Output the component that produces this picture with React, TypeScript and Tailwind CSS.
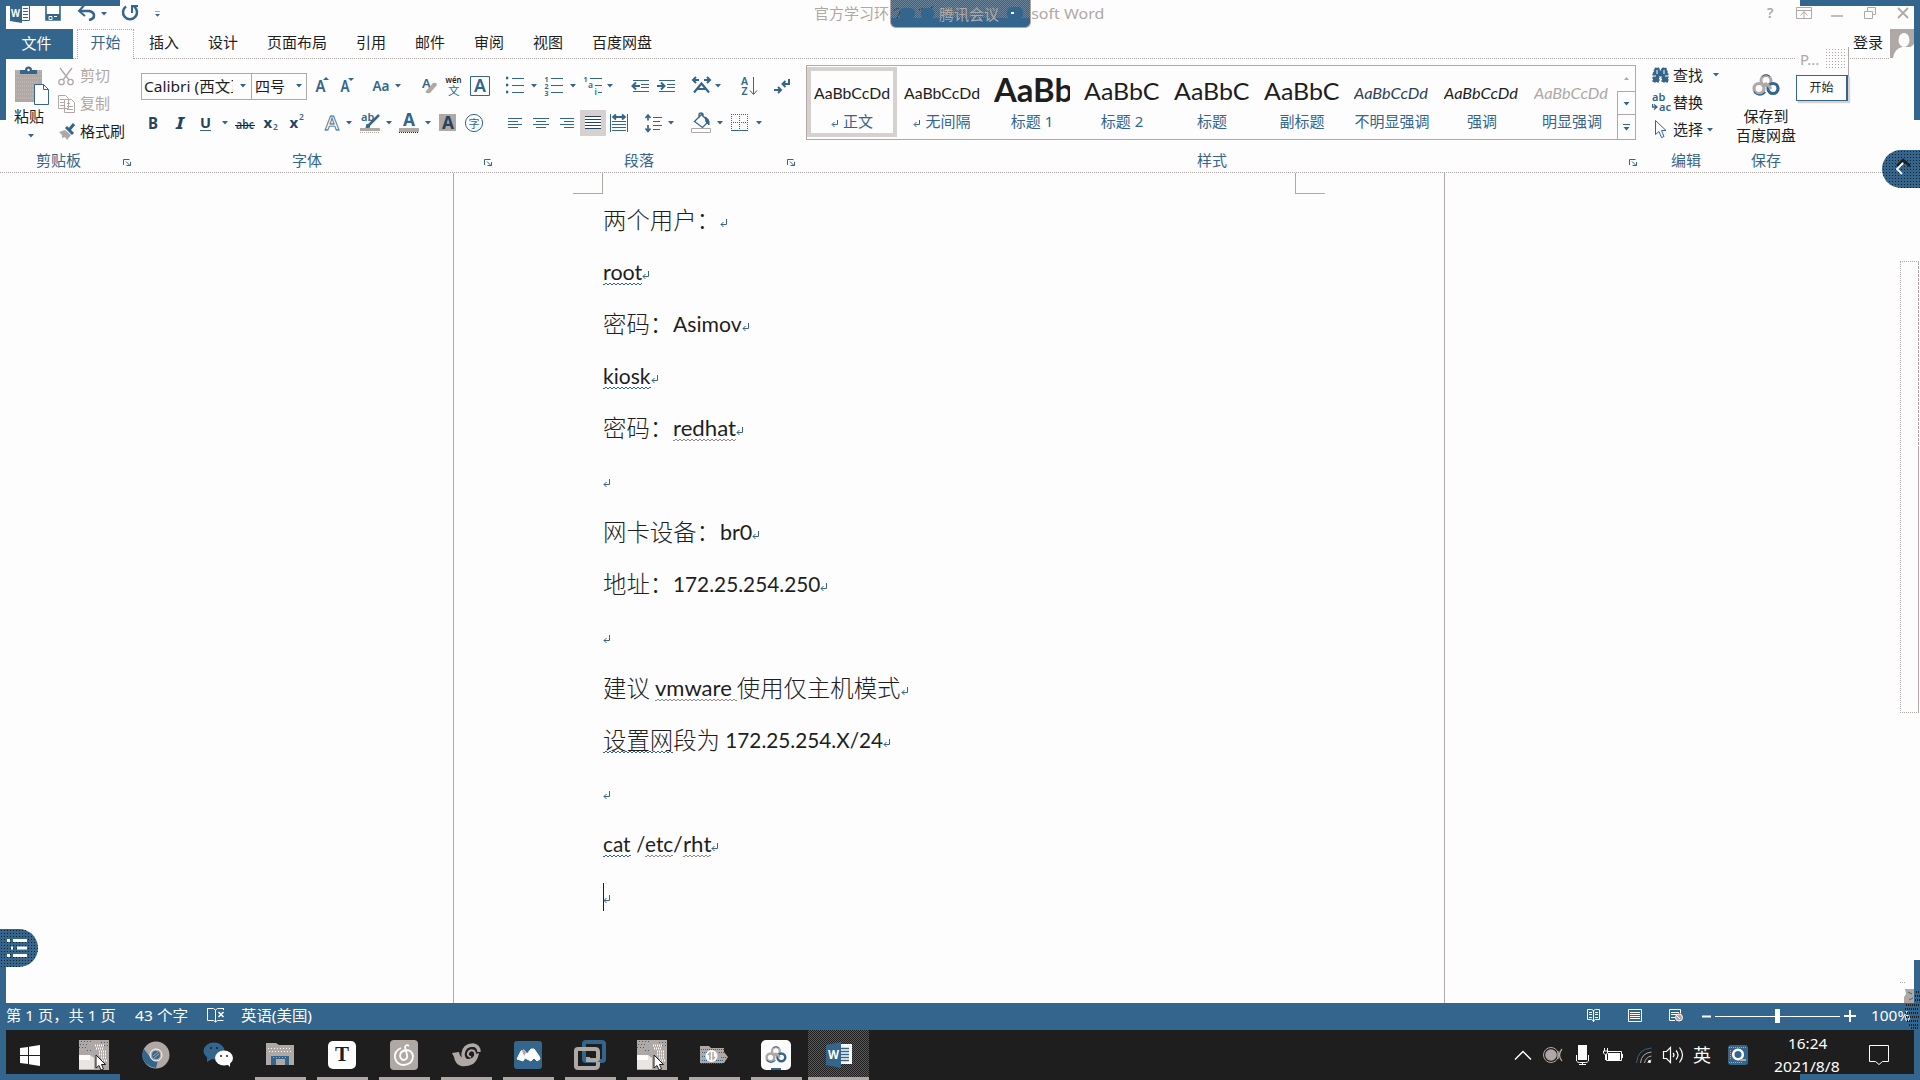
import { useLayoutEffect, useRef, useState, type ReactNode } from 'react';

const BLUE = '#34658d';
const TAUPE = '#b0a8a4';
const INK = '#1e1e1e';

/* Inline drawing whose user space starts at (x, y). */
function Ic({ x, y, w, h, children, className = '' }: { x: number; y: number; w: number; h: number; children?: ReactNode; className?: string }) {
  return (
    <svg width={w} height={h} viewBox={`${x} ${y} ${w} ${h}`} fill="none" stroke={BLUE} strokeWidth={1} className={`block shrink-0 ${className}`}>
      {children}
    </svg>
  );
}

/* Condenses or widens one run of text to a given width. */
function Fit({ w, children, className = '' }: { w: number; children: ReactNode; className?: string }) {
  const ref = useRef<HTMLSpanElement>(null);
  const [s, setS] = useState(1);
  useLayoutEffect(() => {
    if (ref.current) setS(w / ref.current.offsetWidth);
  }, [w]);
  return (
    <span className="block shrink-0" style={{ width: w }}>
      <span ref={ref} className={`inline-block origin-left whitespace-pre ${className}`} style={{ transform: `scaleX(${s})` }}>
        {children}
      </span>
    </span>
  );
}

function Txt({ x, y, size = 18, weight = 400, fill = BLUE, children, italic, len }: { x: number; y: number; size?: number; weight?: number; fill?: string; children: string; italic?: boolean; len?: number }) {
  return (
    <text x={x} y={y} fontSize={size} fontWeight={weight} fill={fill} stroke="none" fontStyle={italic ? 'italic' : 'normal'} textLength={len} lengthAdjust="spacingAndGlyphs">
      {children}
    </text>
  );
}

function Arr({ x, y, c = BLUE }: { x: number; y: number; c?: string }) {
  return <path d={`M${x} ${y}h6l-3 3.4z`} fill={c} stroke="none" />;
}

function HDots({ className = '' }: { className?: string }) {
  return <div className={`h-px shrink-0 bg-[repeating-linear-gradient(90deg,#b0a8a4_0_1px,transparent_1px_2px)] ${className}`} />;
}

function Launcher({ x }: { x: number }) {
  return (
    <Ic x={x} y={158} w={9} h={9}>
      <path d={`M${x + 0.5} 165V159.5h6`} />
      <path d={`M${x + 3} 161.5l4 4M${x + 7.5} 162v3.5h-4`} />
    </Ic>
  );
}

function GroupLabel({ children, left, gap, x }: { children: string; left: string; gap: string; x?: number }) {
  return (
    <div className="flex h-[34px] items-start">
      <span className={`mt-[11px] text-[15px] leading-[20px] whitespace-nowrap text-[#34658d] ${left}`}>{children}</span>
      {x !== undefined && <div className={`mt-[19px] ${gap}`}><Launcher x={x} /></div>}
    </div>
  );
}

function ClipboardGroup() {
  return (
    <div className="flex w-[135px] shrink-0 flex-col">
      <div className="flex h-[80px]">
        <div className="flex w-[52px] flex-col items-center">
          <Ic x={6} y={59} w={52} h={46}>
            <path d="M15 70h27v32H15z" fill={TAUPE} stroke="none" />
            <path d="M16 71h26M16 74h26M16 78h26M16 82h22M16 86h18M16 90h18M16 94h18M16 98h18" stroke="#c9c3c0" strokeDasharray="1 1" />
            <path d="M20 74v-4h5q0-3.500 3.500-3.500t3.500 3.500h5v4z" fill={BLUE} stroke="none" />
            <circle cx="28.500" cy="70" r="1.200" fill="#fdfdfd" stroke="none" />
            <path d="M34.500 84.500h9l5 5v15h-14z" fill="#fdfdfd" />
            <path d="M43.500 84.500v5h5" />
          </Ic>
          <span className="mt-[1px] -ml-[6px] text-[15px] leading-[20px] whitespace-nowrap text-[#1e1e1e]">粘贴</span>
          <Ic x={27} y={126} w={8} h={14} className="mr-[3px]"><Arr x={28} y={134} /></Ic>
        </div>
        <div className="flex flex-col pt-[2px] text-[15px] leading-[20px] whitespace-nowrap">
          <div className="flex h-[28px] items-center text-[#b0a8a4]">
            <Ic x={58} y={61} w={22} h={28}>
              <g stroke={TAUPE} strokeWidth="1.300">
                <path d="M60 68l9 12M72 68l-9 12" />
                <circle cx="61.500" cy="82" r="2.700" /><circle cx="70.500" cy="82" r="2.700" />
              </g>
            </Ic>剪切
          </div>
          <div className="flex h-[28px] items-center text-[#b0a8a4]">
            <Ic x={58} y={89} w={22} h={28}>
              <g stroke={TAUPE} fill="#fdfdfd">
                <path d="M58.500 95.500h7l3 3v10h-10zM64.500 99.500h7l3 3v10h-10z" />
                <path d="M60 99.500h4M60 102.500h4M60 105.500h4M67 103.500h3M67 106.500h6M67 109.500h6" />
              </g>
            </Ic>复制
          </div>
          <div className="flex h-[28px] items-center text-[#1e1e1e]">
            <Ic x={58} y={117} w={22} h={28}>
              <path d="M59 132l6-2 6 5-4 5-2-3-3 1 0-3z" fill={TAUPE} stroke="none" />
              <path d="M66 127l7 7M69 130l5-6" strokeWidth="3" />
            </Ic>格式刷
          </div>
        </div>
      </div>
      <GroupLabel left="ml-[30px]" gap="ml-[42px]" x={123}>剪贴板</GroupLabel>
    </div>
  );
}

function FontGroup() {
  return (
    <div className="flex w-[365px] shrink-0 flex-col">
      <div className="flex pt-[13px]">
        <div className="mt-px flex h-[27px] w-[166px] border border-[#b0a8a4] text-[15px] leading-[24px] whitespace-nowrap text-[#1e1e1e]">
          <div className="w-[91px] overflow-hidden pl-[2px]"><Fit w={122}>Calibri (西文正文)</Fit></div>
          <Ic x={233} y={73} w={18} h={25}><path d="M233 73h18v25h-18z" fill="#fdfdfd" stroke="none" /><Arr x={240} y={83} /></Ic>
          <div className="w-[40px] border-l border-[#b0a8a4] pl-[3px]">四号</div>
          <Ic x={291} y={73} w={13} h={25}><Arr x={296} y={83} /></Ic>
        </div>
        <Ic x={307} y={72} w={190} h={30}>
          <Txt x={315.500} y={92} size={16} weight={600} len={10}>A</Txt><path d="M323 80h6l-3-3z" fill={BLUE} stroke="none" />
          <Txt x={340.500} y={92} size={16} weight={600} len={9}>A</Txt><path d="M348 78h6l-3 3z" fill={BLUE} stroke="none" />
          <Txt x={372.500} y={91} size={15} weight={600} len={17}>Aa</Txt><Arr x={395} y={84} />
          <Txt x={422} y={88} size={13} weight={600}>A</Txt>
          <path d="M426 91l7-8q4-1 4 2l-7 8q-5 1-4-2z" fill={TAUPE} stroke="none" />
          <Txt x={445.500} y={83} size={9.500} weight={600} fill={INK} len={16}>wén</Txt>
          <Txt x={448} y={94.500} size={11.500}>文</Txt>
          <path d="M470.500 76.500h19v19h-19z" /><Txt x={474} y={91.500} size={17} weight={600} len={12}>A</Txt>
        </Ic>
      </div>
      <div className="flex h-[37px] pt-[6px]">
        <Ic x={141} y={108} w={356} h={30}>
          <Txt x={148} y={128.500} size={16} weight={700} fill="#25445f" len={10}>B</Txt>
          <Txt x={176} y={128.500} size={16} weight={700} italic fill="#25445f" len={8}>I</Txt>
          <Txt x={200} y={128} size={15} weight={700} fill="#25445f" len={11}>U</Txt><path d="M200 130.500h11" />
          <Arr x={222} y={121} />
          <Txt x={236} y={129} size={12.500} weight={600} fill="#25445f" len={18}>abc</Txt><path d="M235 125.500h20" stroke={INK} />
          <Txt x={263.500} y={128} size={15} weight={700} fill="#25445f">x</Txt><Txt x={273} y={130} size={8.500} weight={600}>2</Txt>
          <Txt x={289.500} y={128} size={15} weight={700} fill="#25445f">x</Txt><Txt x={299} y={120} size={8.500} weight={600}>2</Txt>
          <text x="325" y="130" fontSize="20" fontWeight="600" fill="#fdfdfd" stroke={BLUE} strokeWidth=".8" textLength="14" lengthAdjust="spacingAndGlyphs">A</text>
          <Arr x={346} y={121} />
          <Txt x={361} y={121} size={11} weight={600}>ab</Txt>
          <path d="M368 126l11-11" strokeWidth="2.500" /><path d="M366 128l1-4 3 3z" fill={BLUE} />
          <path d="M360 128h20v3h-20z" fill={TAUPE} stroke="none" /><path d="M360 132.500h20" stroke={TAUPE} strokeDasharray="1 1" />
          <Arr x={386} y={121} />
          <Txt x={403} y={126} size={17} weight={700} len={12}>A</Txt>
          <path d="M399 128h20v4h-20z" fill={TAUPE} stroke="none" /><path d="M399 132.500h20" stroke={INK} strokeDasharray="1 1" />
          <Arr x={425} y={121} />
          <path d="M439 114h17v17h-17z" fill={TAUPE} stroke="none" /><Txt x={442} y={129} size={17} weight={700} fill="#25445f" len={12}>A</Txt>
          <circle cx="474" cy="123" r="8.600" /><Txt x={468.500} y={127.500} size={11}>字</Txt>
        </Ic>
      </div>
      <GroupLabel left="ml-[151px]" gap="ml-[162px]" x={484}>字体</GroupLabel>
    </div>
  );
}

function ParagraphGroup() {
  return (
    <div className="flex w-[300px] shrink-0 flex-col">
      <div className="flex pt-[13px]">
        <Ic x={506} y={72} w={300} h={30}>
          <path d="M506 77h2v2h-2zM506 84h2v2h-2zM506 91h2v2h-2z" fill={BLUE} strokeWidth=".6" />
          <path d="M512 78.500h12M512 85.500h12M512 92.500h12" /><Arr x={531} y={84} />
          <Txt x={544.500} y={81.500} size={7} weight={700}>1</Txt><Txt x={544.500} y={88.500} size={7} weight={700}>2</Txt><Txt x={544.500} y={95.500} size={7} weight={700}>3</Txt>
          <path d="M551 78.500h12M551 85.500h12M551 92.500h12" /><Arr x={570} y={84} />
          <Txt x={583.500} y={81.500} size={7} weight={700}>1</Txt><Txt x={588} y={88} size={8.500} weight={600}>a</Txt><Txt x={594.500} y={95} size={8.500} weight={600}>i</Txt>
          <path d="M590 78.500h12M595 85.500h7M598 92.500h4" /><Arr x={607} y={84} />
          <path d="M633 80.500h16M641 84.500h8M641 87.500h8M633 91.500h16" /><path d="M633 86h7M636 82.500l-3.500 3.500 3.500 3.500" strokeWidth="2" />
          <path d="M659 80.500h16M667 84.500h8M667 87.500h8M659 91.500h16" /><path d="M657 86h7M661 82.500l3.500 3.500-3.500 3.500" strokeWidth="2" />
          <path d="M693 80h6M696 77l-3 3 3 3M704 80h6M707 77l3 3-3 3" strokeWidth="2" /><path d="M694 92.500l7.500-9 7.500 9M697 89h9" strokeWidth="2.200" /><Arr x={715} y={84} />
          <Txt x={741} y={85} size={10.500} weight={600}>A</Txt><Txt x={741.500} y={95} size={10.500} weight={600}>Z</Txt><path d="M753.500 77v17M750 90.500l3.500 4 3.500-4" />
          <path d="M774 90h6M778 87l3 3-3 3M789 79v5h-6M785.500 81l-3 3 3 3" strokeWidth="2" />
        </Ic>
      </div>
      <div className="flex h-[37px] pt-[6px]">
        <Ic x={506} y={108} w={300} h={30}>
          <path d="M508 118.500h14M508 121.500h10M508 124.500h14M508 127.500h10M533 118.500h16M536 121.500h10M533 124.500h16M536 127.500h10M560 118.500h14M564 121.500h10M560 124.500h14M564 127.500h10" />
          <path d="M580 110h26v26h-26z" fill="#d6d1cf" stroke="none" />
          <path d="M585 116h16v13h-16z" fill="#fdfdfd" stroke="none" />
          <path d="M585 116.500h16M585 119.500h16M585 122.500h16M585 125.500h16M585 128.500h16" stroke="#25445f" />
          <path d="M610.500 114v18M627.500 114v18M612 121.500h14M612 124.500h14M612 127.500h14M612 130.500h14" />
          <path d="M613 117h12M616 114.500l-3 2.500 3 2.500M622 114.500l3 2.500-3 2.500" strokeWidth="1.800" />
          <path d="M648 115.500v5M645.500 118l2.500-3 2.500 3M648 125v6M645.500 128.500l2.500 3 2.500-3" strokeWidth="1.700" />
          <path d="M653 117.500h9M653 121.500h7M653 125.500h9M653 129.500h7" /><Arr x={668} y={121} />
          <path d="M694.500 121.500l7-7 7 7-6 6zM699 118v-4q2-2 4 0v3" strokeWidth="1.300" /><path d="M705 117q5 2 4 8l-3-3z" fill={BLUE} />
          <path d="M691.500 128.500h19v4h-19z" stroke={TAUPE} fill="#fdfdfd" /><Arr x={717} y={121} />
          <path d="M731 114.500h17M731.500 114v17M747.500 114v17M739.500 114v17M731 122.500h17" strokeDasharray="1 1" /><path d="M731 130.500h17" /><Arr x={756} y={121} />
        </Ic>
      </div>
      <GroupLabel left="ml-[118px]" gap="ml-[133px]" x={787}>段落</GroupLabel>
    </div>
  );
}

const styleItems = [
  { name: '正文', mark: true, cls: 'text-[15px] text-[#1e1e1e]', w: 76, text: 'AaBbCcDd', on: true },
  { name: '无间隔', mark: true, cls: 'text-[15px] text-[#1e1e1e]', w: 76, text: 'AaBbCcDd' },
  { name: '标题 1', cls: 'text-[32px] font-bold text-[#1e1e1e]', w: 79, text: 'AaBb' },
  { name: '标题 2', cls: 'text-[23px] text-[#1e1e1e]', w: 76, text: 'AaBbC' },
  { name: '标题', cls: 'text-[23px] text-[#1e1e1e]', w: 76, text: 'AaBbC' },
  { name: '副标题', cls: 'text-[23px] text-[#1e1e1e]', w: 76, text: 'AaBbC' },
  { name: '不明显强调', cls: 'text-[15px] italic text-[#2b4256]', w: 74, text: 'AaBbCcDd' },
  { name: '强调', cls: 'text-[15px] italic text-[#1e1e1e]', w: 74, text: 'AaBbCcDd' },
  { name: '明显强调', cls: 'text-[15px] italic text-[#b0a8a4]', w: 74, text: 'AaBbCcDd' },
];

function StylesGroup() {
  return (
    <div className="flex w-[839px] shrink-0 flex-col">
      <div className="flex h-[80px] pt-[6px]">
        <div className="flex h-[75px] w-[830px] shrink-0 border border-[#b0a8a4]">
          {styleItems.map((s) => (
            <div key={s.name} className="w-[90px] shrink-0 py-[1px]">
              <div className={`flex h-[70px] w-[90px] flex-col items-center border-4 ${s.on ? 'border-[#d6d1cf]' : 'border-transparent'}`}>
                <div className="flex h-[41px] w-[76px] items-center overflow-hidden pt-[2px] font-['Lato'] leading-[39px]">
                  <Fit w={s.w} className={s.cls}>{s.text}</Fit>
                </div>
                <div className="flex h-[19px] items-center gap-[4px] text-[15px] leading-[19px] whitespace-nowrap text-[#34658d]">
                  {s.mark && <Ic x={0} y={0} w={8} h={10}><path d="M6.500 3v4.500H1.500M3.500 5L1 7.500 3.500 10" /></Ic>}
                  {s.name}
                </div>
              </div>
            </div>
          ))}
          <div className="flex w-[18px] flex-col">
            <Ic x={1618} y={66} w={18} h={25}><path d="M1625 80h5l-2.500-3z" fill={TAUPE} stroke="none" /></Ic>
            <div className="h-[23px] w-[18px] border-t border-l border-[#b0a8a4]"><Ic x={1619} y={92} w={16} h={22}><Arr x={1624.500} y={102} /></Ic></div>
            <div className="h-[25px] w-[18px] border-t border-l border-[#b0a8a4]"><Ic x={1619} y={115} w={16} h={22}><path d="M1624 124.500h7" /><Arr x={1624.500} y={127} /></Ic></div>
          </div>
        </div>
      </div>
      <GroupLabel left="ml-[391px]" gap="ml-[402px]" x={1630}>样式</GroupLabel>
    </div>
  );
}

function CloudLogo({ s = 1 }: { s?: number }) {
  return (
    <svg width={28 * s} height={22 * s} viewBox="0 0 28 22" fill="none" className="block shrink-0">
      <circle cx="14" cy="6.500" r="5" stroke={TAUPE} strokeWidth="3" />
      <circle cx="7" cy="14.500" r="5" stroke={TAUPE} strokeWidth="3.200" />
      <circle cx="21" cy="14.500" r="5" stroke={BLUE} strokeWidth="3.200" />
      <path d="M11 11l3-1 3 2 2 3" stroke={TAUPE} strokeWidth="3" />
      <path d="M2 17.500q2 3.500 5.500 3.500t6-3" stroke={BLUE} strokeWidth="1.300" />
      <path d="M10 2.500q4-3.500 8 0" stroke={BLUE} />
    </svg>
  );
}

function EditGroup() {
  return (
    <div className="flex w-[84px] shrink-0 flex-col pl-[7px]">
      <div className="flex h-[80px] flex-col pt-[2px] text-[15px] leading-[20px] whitespace-nowrap text-[#1e1e1e]">
        <div className="flex h-[27px] items-center">
          <Ic x={1653} y={61} w={21} h={27}>
            <path d="M1654 74l2-6h4l1 3h1l1-3h4l2 6v8h-6v-6h-3v6h-6z" fill={BLUE} stroke={BLUE} strokeDasharray="2 1" />
            <path d="M1654 76h3M1666 76h3M1658 70v4M1665 70v4" stroke="#fdfdfd" />
          </Ic>
          查找
          <Ic x={1704} y={61} w={20} h={27}><Arr x={1714} y={73} /></Ic>
        </div>
        <div className="flex h-[27px] items-center">
          <Ic x={1653} y={88} w={21} h={27}>
            <Txt x={1653} y={101} size={11} weight={600}>ab</Txt><Txt x={1660} y={110.500} size={11} weight={600}>ac</Txt>
            <path d="M1653.500 104v3h4M1655 104.500l3 2.500-3 2.500" strokeWidth="1.300" />
          </Ic>
          替换
        </div>
        <div className="flex h-[27px] items-center">
          <Ic x={1653} y={115} w={21} h={27}><path d="M1656.500 120.500v14l3.500-3 2.500 6 2.500-1-2.500-6h4.500z" fill="#fdfdfd" /></Ic>
          选择
          <Ic x={1704} y={115} w={12} h={27}><Arr x={1708} y={128} /></Ic>
        </div>
      </div>
      <GroupLabel left="ml-[19px]" gap="">编辑</GroupLabel>
    </div>
  );
}

function SaveGroup() {
  return (
    <div className="-ml-px flex w-[76px] shrink-0 flex-col items-center">
      <div className="flex h-[80px] flex-col items-center pt-[15px] text-[15px] leading-[19px] whitespace-nowrap text-[#1e1e1e]">
        <CloudLogo />
        <span className="mt-[11px]">保存到</span>
        <span>百度网盘</span>
      </div>
      <GroupLabel left="" gap="">保存</GroupLabel>
    </div>
  );
}

const tabs = ['插入', '设计', '页面布局', '引用', '邮件', '审阅', '视图', '百度网盘'];

function TitleBar() {
  return (
    <div className="relative flex h-[29px] shrink-0 justify-between">
      <Ic x={0} y={0} w={170} h={29}>
        <path d="M10 4l12-2v21l-12-2z" fill={BLUE} stroke="none" /><path d="M22 5.500h7.500v15H22M23 8.500h5M23 11.500h5M23 14.500h5M23 17.500h5" />
        <Txt x={11} y={16.500} size={10} weight={700} fill="#fdfdfd" len={9}>W</Txt>
        <path d="M46 4.500v15.500h14V4.500" strokeWidth="1.600" /><path d="M46 14h14v6H46z" fill={BLUE} stroke="none" /><path d="M49 16.500h3v3h-3zM54 16.500h3" stroke="#fdfdfd" />
        <path d="M80 11h9q5 1 5 4.500t-5 4.500" strokeWidth="2.600" /><path d="M84 5.500L79 11l6 5" strokeWidth="2" /><Arr x={101} y={12} />
        <path d="M126 6.500a7 7 0 1 0 8 0" strokeWidth="2.500" /><path d="M132 13V6h6" strokeWidth="2" />
        <path d="M155 11.500h5" stroke={TAUPE} /><path d="M155 14h5l-2.500 2.700z" fill={BLUE} stroke="none" />
      </Ic>
      <div className="absolute top-[3px] left-[814px] flex w-[290px] justify-between text-[15px] leading-[20px] whitespace-nowrap text-[#b0a8a4]">
        <span>官方学习环境</span>
        <Fit w={115}>Microsoft Word</Fit>
      </div>
      <div className="absolute top-0 left-[890px] flex h-[28px] w-[141px] items-center rounded-b-[6px] border border-t-0 border-[#b0a8a4] bg-[#34658d] text-[15px] leading-[20px] text-[#b0a8a4]">
        <div className="absolute inset-x-0 top-0 h-[18px] bg-[repeating-conic-gradient(#6b8499_0_25%,transparent_0_50%)] bg-[length:2px_2px]" />
        <svg width="141" height="27" viewBox="890 0 141 27" className="absolute top-0 left-0" fill={BLUE}>
          <rect x="898" y="8" width="16" height="11" rx="5" /><rect x="920" y="8" width="13" height="11" rx="5" /><rect x="1006" y="7" width="16" height="12" rx="5" />
          <path d="M893 10l5-2M896 18l3-6M918 10l4-2M930 8l3-2" stroke={INK} strokeDasharray="1 1" />
          <path d="M1010 12h3v2h-3z" fill="#fdfdfd" />
        </svg>
        <span className="relative ml-[48px]">腾讯会议</span>
      </div>
      <Ic x={1750} y={0} w={170} h={29}>
        <g stroke={TAUPE}>
          <Txt x={1767} y={18} size={14} weight={600} fill={TAUPE}>?</Txt>
          <path d="M1796.500 7.500h15v11h-15zM1796 10.500h16M1804 18v-6M1800.500 15.500l3.500-4 3.500 4" />
          <path d="M1831 16h12" strokeWidth="1.500" />
          <path d="M1864.500 11.500h8v7h-8zM1867.500 11v-3.500h8v7h-3" />
          <path d="M1898 8l10 10M1908 8l-10 10" strokeWidth="1.800" />
        </g>
      </Ic>
    </div>
  );
}

function TabBar() {
  return (
    <div className="flex h-[30px] shrink-0 text-[15px] leading-[20px] whitespace-nowrap text-[#1e1e1e]">
      <div className="flex w-[73px] items-center justify-center bg-[#34658d] pb-[3px] text-[#fdfdfd]">文件</div>
      <HDots className="mt-[29px] w-[4px]" />
      <div className="flex w-[57px] flex-col">
        <HDots />
        <div className="flex h-[29px] justify-between">
          <div className="w-px bg-[repeating-linear-gradient(#b0a8a4_0_1px,transparent_1px_2px)]" />
          <span className="mt-[2px] text-[#34658d]">开始</span>
          <div className="w-px bg-[repeating-linear-gradient(#b0a8a4_0_1px,transparent_1px_2px)]" />
        </div>
      </div>
      <div className="flex grow flex-col">
        <div className="flex h-[29px] items-start">
          <div className="flex gap-[29px] pt-[3px] pl-[15px]">{tabs.map((t) => <span key={t}>{t}</span>)}</div>
          <span className="mt-[3px] mr-[7px] ml-auto">登录</span>
          <Ic x={1890} y={29} w={30} h={29}>
            <path d="M1890 29h24v15q-3 4-9 4h-3q-9 2-9 11h-3z" fill={TAUPE} stroke="none" />
            <ellipse cx="1904" cy="40" rx="5.500" ry="7" fill="#fdfdfd" stroke="none" />
            <path d="M1909 47l5 1v10h-20q0-9 8-11z" fill="#fdfdfd" stroke="none" />
          </Ic>
        </div>
        <HDots className="w-[1756px]" />
      </div>
    </div>
  );
}

function Mark() {
  return <Ic x={0} y={0} w={9} h={14} className="mt-[22px]"><path d="M6.500 3v5.500H1M3.500 6L1 8.500 3.500 11" /></Ic>;
}

function Wavy({ tone }: { tone: 'blue' | 'red' }) {
  return tone === 'blue'
    ? <i className="absolute inset-x-0 top-[37px] h-[2px] bg-[repeating-conic-gradient(#34658d_0_25%,transparent_0_50%)] bg-[length:4px_2px]" />
    : <i className="absolute inset-x-0 top-[37px] h-[2px] bg-[repeating-conic-gradient(#8f8682_0_25%,transparent_0_50%)] bg-[length:4px_2px]" />;
}

type Run = { t: string; w?: number; u?: 'blue' | 'red' };
const lines: Run[][] = [
  [{ t: '两个用户：' }],
  [{ t: 'root', w: 39, u: 'blue' }],
  [{ t: '密码：' }, { t: 'Asimov', w: 69 }],
  [{ t: 'kiosk', w: 48, u: 'blue' }],
  [{ t: '密码：' }, { t: 'redhat', w: 63, u: 'red' }],
  [],
  [{ t: '网卡设备：' }, { t: 'br0', w: 32 }],
  [{ t: '地址：' }, { t: '172.25.254.250', w: 147 }],
  [],
  [{ t: '建议' }, { t: ' ', w: 5 }, { t: 'vmware ', w: 82, u: 'red' }, { t: '使用仅主机模式' }],
  [{ t: '设置网', u: 'blue' }, { t: '段为' }, { t: ' 172.25.254.X/24', w: 163 }],
  [],
  [{ t: 'cat', w: 28, u: 'blue' }, { t: ' /', w: 14 }, { t: 'etc', w: 28, u: 'red' }, { t: '/', w: 10 }, { t: 'rht', w: 28, u: 'red' }],
  [],
];

function Document() {
  return (
    <div className="relative flex h-[830px] shrink-0 bg-[#fdfdfd]">
      <div className="ml-[453px] flex w-[992px] flex-col border-x border-[#b0a8a4]">
        <div className="flex h-[21px] justify-between pr-[119px] pl-[119px]">
          <div className="h-[21px] w-[30px] border-r border-b border-[#b0a8a4]" />
          <div className="h-[21px] w-[30px] border-b border-l border-[#b0a8a4]" />
        </div>
        <div className="flex flex-col pl-[149px] text-[#1e1e1e]">
          {lines.map((runs, i) => (
            <div key={i} className="flex h-[52px] whitespace-pre">
              {runs.map((r, j) => (
                <div key={j} className="relative shrink-0">
                  {r.w
                    ? <Fit w={r.w} className="font-['Lato'] text-[21.5px] leading-[53px]">{r.t}</Fit>
                    : <span className="block font-['Noto_Sans_CJK_SC',sans-serif] text-[23.4px] leading-[50px] font-light">{r.t}</span>}
                  {r.u && <Wavy tone={r.u} />}
                </div>
              ))}
              {i === lines.length - 1 && <div className="mt-[13px] -mr-px h-[28px] w-px bg-[#1e1e1e]" />}
              <Mark />
            </div>
          ))}
        </div>
      </div>
      <div className="mt-[88px] ml-[455px] h-[452px] w-[19px]">
        <HDots />
        <div className="flex h-[450px] justify-between">
          <div className="w-px bg-[repeating-linear-gradient(#b0a8a4_0_1px,transparent_1px_2px)]" />
          <div className="flex w-px flex-col">
            <div className="h-[186px] bg-[repeating-linear-gradient(#b0a8a4_0_3px,transparent_3px_4px)]" />
            <div className="grow bg-[#b0a8a4]" />
          </div>
        </div>
        <HDots />
      </div>
    </div>
  );
}

function StatusBar() {
  return (
    <div className="flex h-[27px] shrink-0 items-start bg-[#34658d] text-[15px] leading-[20px] whitespace-nowrap text-[#fdfdfd]">
      <div className="mt-[2px] ml-[6px] w-[129px]"><Fit w={110}>第 1 页，共 1 页</Fit></div>
      <div className="mt-[2px] w-[72px]"><Fit w={53}>43 个字</Fit></div>
      <Ic x={207} y={1003} w={34} h={27}>
        <g stroke="#fdfdfd"><path d="M207.500 1008.500h6l2 1.500 2-1.500h6M207.500 1008v12.500h6l2 1.500 2-1.500h6M215.500 1010v12M223.500 1008v2" /><path d="M218.500 1012l5 5M223.500 1012l-5 5" strokeWidth="1.600" /></g>
      </Ic>
      <div className="mt-[2px]"><Fit w={71}>英语(美国)</Fit></div>
      <Ic x={1580} y={1003} w={290} h={27} className="ml-auto">
        <g stroke="#fdfdfd">
          <path d="M1587.500 1009.500h4l2 1 2-1h4v10h-4l-2 1.500-2-1.500h-4zM1593.500 1010v12M1589 1012.500h3M1589 1014.500h3M1589 1017.500h3M1595 1012.500h3M1595 1014.500h3M1595 1017.500h3" />
          <path d="M1628.500 1009.500h13v12h-13zM1630 1012.500h10M1630 1014.500h10M1630 1016.500h10M1630 1018.500h10" />
          <path d="M1675 1020.500h-5.500v-11h11v4M1671 1012.500h8M1671 1014.500h6M1671 1017.500h4" />
          <circle cx="1679" cy="1017.500" r="3.500" fill={TAUPE} /><path d="M1677 1016l3 3" />
          <path d="M1702 1016.500h9" strokeWidth="2" /><path d="M1715 1016.500h125" /><path d="M1775 1009h5v14h-5z" fill="#fdfdfd" stroke="none" />
          <path d="M1844 1016h12M1850 1010v12" strokeWidth="2" />
        </g>
      </Ic>
      <div className="mt-[2px] mr-[10px] ml-[1px]"><Fit w={39}>100%</Fit></div>
    </div>
  );
}

function Cursor({ x, y }: { x: number; y: number }) {
  return <path d={`M${x} ${y}v13l3-2.500 2 4.500 2.500-1-2-4.500h4z`} fill="#fdfdfd" stroke={INK} />;
}

function Photo() {
  return (
    <svg width="30" height="30" viewBox="0 0 30 30" className="block">
      <path d="M0 0h30v30H0z" fill={TAUPE} />
      <path d="M2 1.500h10M1 4.500h9M0 7.500h8M8 10.500h4M22 2.500h7M25 5.500h4" stroke={BLUE} strokeDasharray="1 2" />
      <path d="M16 5.500h9M17 8.500h8M20 11.500h8M20 14.500h8M22 17.500h6M23 20.500h5" stroke="#fdfdfd" strokeWidth="2" strokeDasharray="1 1" />
      <path d="M0 15h11l4 3v11H0z" fill="#e8e5e3" /><path d="M0 15h11v5H0z" fill="#fdfdfd" />
      <Cursor x={17} y={15} />
    </svg>
  );
}

const taskIcons: { k: string; line: boolean; el: ReactNode }[] = [
  { k: 'photo', line: false, el: <Photo /> },
  {
    k: 'chrome', line: false, el: (
      <svg width="30" height="30" viewBox="0 0 30 30" fill="none"><circle cx="15" cy="15" r="13.500" fill={TAUPE} /><path d="M3 9q-5 9 4 16 4 3 8 3l2-8-7-2z" fill={BLUE} /><circle cx="15" cy="15" r="6" fill={TAUPE} stroke="#fdfdfd" /><circle cx="15" cy="15" r="4" fill={BLUE} /><path d="M12 16l5-4M13 18l5-4" stroke={TAUPE} /></svg>),
  },
  {
    k: 'wechat', line: false, el: (
      <svg width="30" height="30" viewBox="0 0 30 30"><ellipse cx="11" cy="11" rx="10.500" ry="8.500" fill={BLUE} /><path d="M4 17v5l5-3z" fill={BLUE} /><ellipse cx="21" cy="18" rx="9" ry="7.500" fill="#fdfdfd" /><path d="M24 24l3 3v-5z" fill="#fdfdfd" /><path d="M17 16h2M23 16h2M7 8h2M13 8h2" stroke={INK} strokeWidth="1.500" /></svg>),
  },
  {
    k: 'explorer', line: true, el: (
      <svg width="30" height="30" viewBox="0 0 30 30"><path d="M1 3h10l3 2h15v20H1z" fill={TAUPE} /><path d="M3 8.500h24M4 11.500h22" stroke="#fdfdfd" strokeDasharray="1 2" /><path d="M6 16h18v9h-4v-6h-9v6H6z" fill={BLUE} /><path d="M8 17.500h14" stroke={TAUPE} strokeDasharray="1 2" /></svg>),
  },
  {
    k: 'typora', line: true, el: (
      <div className="flex h-[28px] w-[28px] items-center justify-center rounded-[5px] bg-[#fdfdfd] pb-px font-['Liberation_Serif'] text-[21px] leading-none font-bold text-[#1e1e1e]">T</div>),
  },
  {
    k: 'music', line: true, el: (
      <svg width="30" height="30" viewBox="0 0 30 30" fill="none" stroke="#fdfdfd" strokeWidth="1.800"><rect x="1" y="0" width="28" height="30" rx="4" fill={TAUPE} stroke="none" /><path d="M12 8q-7 3-6 10 2 7 9 7 9-1 9-9-1-6-7-6-6 1-6 6 1 4 4 4 4-1 3-5l-2-8q1-3 4-1" /></svg>),
  },
  {
    k: 'swirl', line: true, el: (
      <svg width="30" height="30" viewBox="0 0 30 30" fill="none" stroke={TAUPE}>
        <path d="M1 13l7-1q1 7 8 7 6 0 9-5l3-1q-1 7-6 11-6 3-12 2Q4 24 3 17z" fill={TAUPE} stroke="none" />
        <path d="M19 22q-7-1-7-8 1-9 10-9 6 1 6 7" strokeWidth="3.400" />
        <path d="M20 17q-4-1-3-4 2-4 6-2 3 4-1 8" strokeWidth="2" />
      </svg>),
  },
  {
    k: 'mail', line: true, el: (
      <svg width="30" height="30" viewBox="0 0 30 30"><rect x="1" y="1" width="28" height="28" rx="3" fill={BLUE} /><path d="M4 19l4-8 3-1 3 4 4-5 3 0 5 7 1 3-3 2-3-3-3 3-4-2-2-1-2 3z" fill="#fdfdfd" stroke="#fdfdfd" strokeLinejoin="round" /><path d="M9 10.500l2-1.500 2 4-2 3z" fill={TAUPE} /></svg>),
  },
  {
    k: 'vmware', line: true, el: (
      <svg width="32" height="30" viewBox="0 0 32 30" fill="none" strokeWidth="4"><rect x="10" y="2" width="20" height="19" rx="2" stroke={BLUE} /><path d="M24 22v3q0 3-3 3H4q-2 0-2-2V11q0-2 2-2h17q3 0 3 3v6q0 2-2 2H14v-3" stroke={TAUPE} /></svg>),
  },
  { k: 'photo2', line: true, el: <Photo /> },
  {
    k: 'transfer', line: true, el: (
      <svg width="30" height="30" viewBox="0 0 30 30"><path d="M1 6h9l2 2h13v4l4 5-4 6H1z" fill={TAUPE} /><path d="M2 9.500h24M3 12.500h6M3 16.500h4M3 20.500h22M20 12.500h5M22 17.500h5M2 23.500h22" stroke={BLUE} strokeDasharray="1 1" /><circle cx="12.500" cy="16" r="6" fill="#fdfdfd" /><path d="M11 20v-7l-2 2M14 12v7l2-2" stroke={TAUPE} fill="none" strokeWidth="1.500" /></svg>),
  },
  {
    k: 'pan', line: true, el: (
      <div className="flex h-[30px] w-[30px] flex-col items-center rounded-[5px] bg-[#fdfdfd] pt-[6px]"><CloudLogo s={0.78} /><div className="mt-[5px] h-[2px] w-[10px] bg-[#34658d]" /></div>),
  },
];

function Taskbar() {
  return (
    <div className="flex h-[50px] shrink-0 bg-[#1e1e1e]">
      <div className="flex w-[63px] items-center justify-end pr-[23px]">
        <svg width="20" height="21" viewBox="0 0 20 21" fill="#fdfdfd"><path d="M0 3l8-1v8H0zM9 1.700L20 0v10H9zM0 11h8v8l-8-1zM9 11h11v10L9 19.300z" /></svg>
      </div>
      {taskIcons.map((t) => (
        <div key={t.k} className="flex w-[62px] flex-col items-center">
          <div className="flex h-[47px] items-center pt-[3px]">{t.el}</div>
          {t.line && <div className="h-[3px] w-[51px] bg-[#b0a8a4]" />}
        </div>
      ))}
      <div className="ml-px flex w-[61px] flex-col items-center bg-[repeating-conic-gradient(#34658d_0_25%,#1e1e1e_0_50%)] bg-[length:2px_2px]">
        <div className="flex h-[47px] items-center pt-[3px]">
          <svg width="28" height="28" viewBox="0 0 28 28"><path d="M1 4l15-3v26L1 24z" fill={BLUE} /><path d="M16 3h11v20H16z" fill="#fdfdfd" /><path d="M16 7.500h8M16 10.500h8M16 13.500h8M16 16.500h8M16 19.500h8" stroke={BLUE} strokeWidth="1.300" /><text x="3" y="18" fontSize="13" fontWeight="700" fill="#fdfdfd" textLength="11" lengthAdjust="spacingAndGlyphs">W</text></svg>
        </div>
        <div className="h-[3px] w-[61px] bg-[#b0a8a4]" />
      </div>
      <Ic x={1510} y={1030} w={180} h={50} className="ml-auto">
        <g stroke="#fdfdfd">
          <path d="M1515 1059.500l8-8 8 8" strokeWidth="1.500" />
          <circle cx="1551" cy="1055" r="7.500" stroke={TAUPE} /><circle cx="1551" cy="1055" r="5.800" fill={TAUPE} stroke="none" /><path d="M1562 1049q-5 6 0 12M1558 1051v8" stroke={TAUPE} strokeWidth="1.300" />
          <path d="M1578 1045h9v15h-9z" fill="#fdfdfd" stroke="none" /><path d="M1576.500 1055v6q1 1.500 3 1.500h6q2 0 3-1.500v-6M1582.500 1062v3M1579 1064.500h7" />
          <path d="M1606.500 1051.500h15v9h-15zM1622.500 1054v4" /><path d="M1608 1053h12v7h-12z" fill="#fdfdfd" stroke="none" /><path d="M1603.500 1051h4v2l-2 2-2-2zM1604.500 1048v3M1607.500 1048v3M1605.500 1055v5" fill={INK} />
          <path d="M1636.500 1063q1-14 15-15" stroke={BLUE} /><path d="M1640.500 1063q1-10 11-11M1644.500 1063q1-6 7-7M1647.500 1063q1-3 4-3" stroke={TAUPE} /><circle cx="1649.500" cy="1061.500" r="1.500" fill="#fdfdfd" stroke="none" />
          <path d="M1663.500 1051.500h3l4-4v15l-4-4h-3zM1673 1053q2 2 0 4M1676 1050.500q4 4.500 0 9M1679.500 1047.500q6 7.500 0 15" strokeWidth="1.200" />
        </g>
      </Ic>
      <span className="mt-[12px] ml-[3px] w-[35px] text-[18px] leading-[26px] text-[#fdfdfd]">英</span>
      <Ic x={1728} y={1030} w={22} h={50}>
        <rect x="1728" y="1045" width="20" height="20" rx="3" fill={BLUE} stroke="none" />
        <path d="M1729 1047.500h18M1729 1062.500h14M1730.500 1050v10" stroke={TAUPE} strokeDasharray="1 1" />
        <circle cx="1738" cy="1054.500" r="4.800" stroke="#fdfdfd" strokeWidth="2.600" /><path d="M1740 1060h6" stroke={TAUPE} strokeWidth="2" />
      </Ic>
      <div className="ml-[23px] flex w-[68px] flex-col items-center text-[15px] leading-[23px] text-[#fdfdfd]">
        <div className="mt-[2px]"><Fit w={39}>16:24</Fit></div>
        <Fit w={66}>2021/8/8</Fit>
      </div>
      <Ic x={1841} y={1030} w={79} h={50}><path d="M1869.500 1045.500h19v16h-6l-3.500 3-3.500-3h-6z" stroke="#fdfdfd" /></Ic>
    </div>
  );
}

function Overlays() {
  return (
    <>
      <div className="absolute top-0 left-0 h-[120px] w-[120px] border-t-[6px] border-l-[6px] border-[#34658d]" />
      <div className="absolute top-0 right-0 h-[120px] w-[120px] border-t-[6px] border-r-[6px] border-[#34658d]" />
      <div className="absolute bottom-0 left-0 h-[120px] w-[120px] border-b-[6px] border-l-[6px] border-[#34658d]" />
      <div className="absolute right-0 bottom-0 h-[120px] w-[120px] border-r-[6px] border-b-[6px] border-[#34658d]" />

      <div className="absolute top-[45px] left-[1796px] flex h-[28px] w-[53px] items-center justify-between bg-[#fdfdfd] pr-[4px] pl-[4px] text-[15px] leading-[20px] text-[#b0a8a4]">
        <Fit w={19}>P...</Fit>
        <i className="h-[22px] w-[20px] bg-[radial-gradient(#b0a8a4_0.5px,transparent_0.7px)] bg-[length:3px_3px]" />
      </div>
      <div className="absolute top-[47px] left-[1848px] h-[54px] w-px bg-[#b0a8a4]" />
      <div className="absolute top-[75px] left-[1796px] flex h-[26px] w-[52px] items-center justify-center border border-r-2 border-[#34658d] bg-[#fdfdfd] text-[12px] text-[#1e1e1e] shadow-[2px_2px_1px_#d6d1cf]">开始</div>

      <div className="absolute top-[150px] right-0 h-[38px] w-[38px] rounded-l-[19px] bg-[#34658d]">
        <div className="h-full w-full rounded-l-[19px] bg-[radial-gradient(#1e1e1e_0.6px,transparent_0.9px)] bg-[length:3px_3px]">
          <Ic x={1882} y={150} w={38} h={38}><path d="M1897 166l6-6 7 6" stroke={INK} strokeWidth="2.500" /><path d="M1903 163l-6 6 5 5" stroke="#fdfdfd" strokeWidth="1.800" /></Ic>
        </div>
      </div>
      <div className="absolute top-[929px] left-0 h-[38px] w-[38px] rounded-r-[19px] bg-[#34658d]">
        <div className="h-full w-full rounded-r-[19px] bg-[radial-gradient(#1e1e1e_0.6px,transparent_0.9px)] bg-[length:3px_3px]">
          <Ic x={0} y={929} w={38} h={38}><path d="M13 940.500h14M17 948h10M13 955.500h14M7 940.500h3M11 948h2M7 955.500h3" stroke="#fdfdfd" strokeWidth="3" /></Ic>
        </div>
      </div>
      <Ic x={1896} y={980} w={24} h={52} className="absolute top-[980px] left-[1896px]">
        <path d="M1900 982.500h5" stroke={TAUPE} strokeDasharray="1 1" />
        <path d="M1905 989h9v14h-10v-6l2-3z" fill={TAUPE} stroke="none" /><path d="M1908 992l4 2M1909 1000l4-2" />
        <path d="M1916 992h4M1915 996h5M1915 1000h5M1906 1005h13M1905 1009h14M1905 1013h14M1906 1017h13M1907 1021h12M1909 1025h10M1911 1028h8" stroke={INK} strokeWidth="2" strokeDasharray="1 1" />
      </Ic>
    </>
  );
}

export default function App() {
  return (
    <div className="relative flex h-[1080px] w-[1920px] flex-col overflow-hidden bg-[#fdfdfd] font-['Noto_Sans','Noto_Sans_CJK_SC',sans-serif]">
      <TitleBar />
      <TabBar />
      <div className="flex h-[113px] shrink-0 pl-[6px]">
        <ClipboardGroup />
        <FontGroup />
        <ParagraphGroup />
        <StylesGroup />
        <EditGroup />
        <SaveGroup />
      </div>
      <HDots />
      <Document />
      <StatusBar />
      <Taskbar />
      <Overlays />
    </div>
  );
}
